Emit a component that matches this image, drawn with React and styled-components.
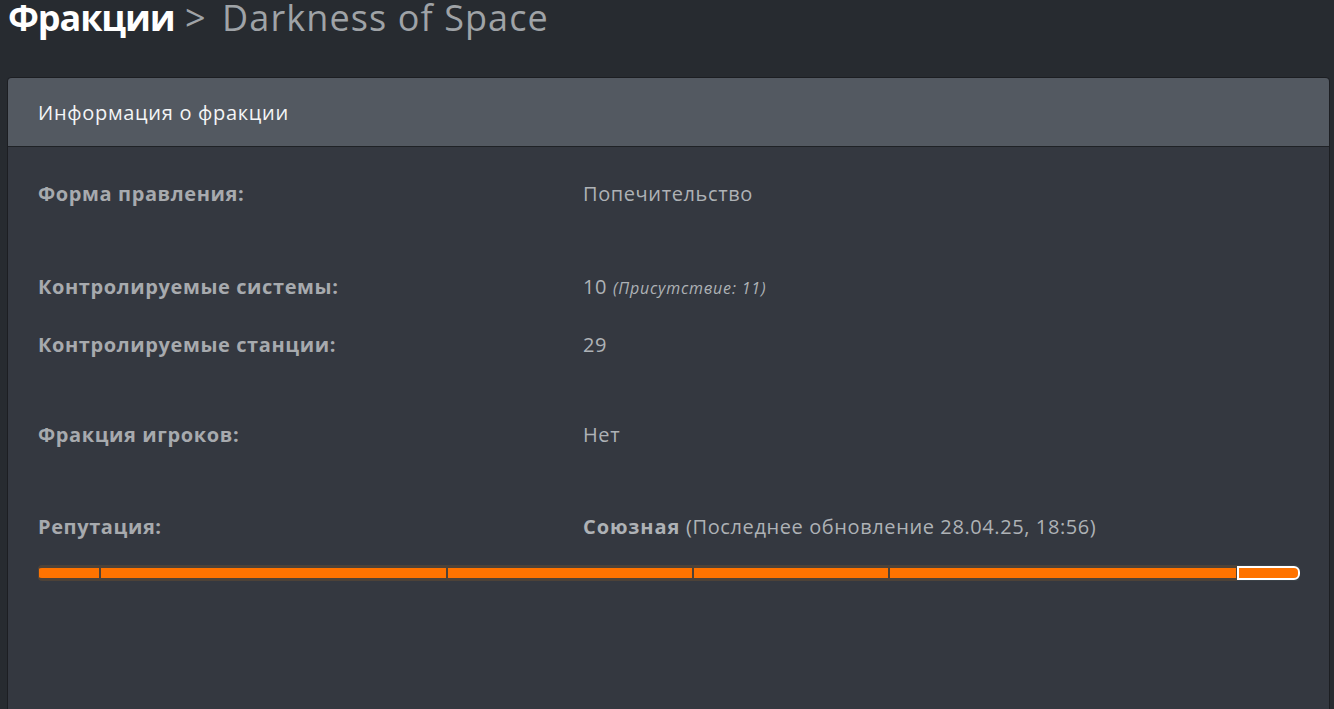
import styled, { createGlobalStyle } from "styled-components";

const GlobalStyle = createGlobalStyle`
  html, body {
    margin: 0;
    padding: 0;
    background: #272b30;
    font-family: "Open Sans", "Noto Sans", sans-serif;
  }
`;

const Page = styled.div`
  width: 1334px;
  height: 709px;
  overflow: hidden;
  padding: 0 4px 0 7px;
  box-sizing: border-box;
`;

const Title = styled.h1`
  margin: 0 0 0 1px;
  height: 77px;
  font-size: 36px;
  font-weight: 700;
  color: #ffffff;
  letter-spacing: -1.1px;
  line-height: 36px;
  white-space: nowrap;
`;

const Crumb = styled.span`
  margin-left: 2px;
  font-weight: 400;
  color: #9fa3a7;
  letter-spacing: 1.1px;
`;

const Sep = styled.span`
  margin-right: 5px;
`;

const Card = styled.div`
  border: 1px solid #1c1e22;
  border-radius: 4px 4px 0 0;
  background: #343840;
  min-height: 640px;
`;

const CardHeader = styled.div`
  height: 68px;
  display: flex;
  align-items: center;
  padding: 0 30px;
  background: #535961;
  border-bottom: 1px solid #1f2226;
  border-radius: 4px 4px 0 0;
  font-size: 20px;
  letter-spacing: 0.7px;
  color: #f4f5f6;
`;

const CardBody = styled.div`
  padding: 33px 29px 0 30px;
  display: flex;
  flex-direction: column;
`;

const Row = styled.div`
  display: grid;
  grid-template-columns: 545px 1fr;
  line-height: 28px;
  font-size: 20px;
  margin-top: ${(p) => p.$gap || 0}px;
`;

const Label = styled.div`
  font-weight: 700;
  color: #a7aaae;
  letter-spacing: 0.6px;
`;

const Value = styled.div`
  color: #aeb2b6;
  letter-spacing: 0.6px;
`;

const Note = styled.em`
  font-size: 16px;
  letter-spacing: 0.8px;
`;

const Strong = styled.b`
  font-weight: 700;
  letter-spacing: 0.9px;
`;

const Bar = styled.div`
  margin-top: 24px;
  height: 16px;
  display: flex;
  background: #3b4249;
  border-radius: 4px;
  overflow: hidden;
`;

const Segment = styled.div`
  flex: 0 0 ${(p) => p.$w}px;
  box-sizing: border-box;
  background: #ff7300;
  border-top: 3px solid #4d4238;
  border-bottom: 3px solid #4d4238;
  border-left: 1px solid #4d4238;
  border-right: 1px solid #4d4238;
  &:first-child {
    border-radius: 4px 0 0 4px;
  }
`;

const Current = styled(Segment)`
  border: 2px solid #ffffff;
  border-radius: 0 6px 6px 0;
  margin: 1px 0;
`;

const segments = [62, 347, 246, 196, 348];

export default function App() {
  return (
    <Page>
      <GlobalStyle />
      <Title>
        Фракции{" "}
        <Crumb>
          <Sep>&gt;</Sep> Darkness of Space
        </Crumb>
      </Title>
      <Card>
        <CardHeader>Информация о фракции</CardHeader>
        <CardBody>
          <Row>
            <Label>Форма правления:</Label>
            <Value>Попечительство</Value>
          </Row>
          <Row $gap={65}>
            <Label>Контролируемые системы:</Label>
            <Value>
              10 <Note>(Присутствие: 11)</Note>
            </Value>
          </Row>
          <Row $gap={29}>
            <Label>Контролируемые станции:</Label>
            <Value>29</Value>
          </Row>
          <Row $gap={62}>
            <Label>Фракция игроков:</Label>
            <Value>Нет</Value>
          </Row>
          <Row $gap={64}>
            <Label>Репутация:</Label>
            <Value>
              <Strong>Союзная</Strong> (Последнее обновление 28.04.25, 18:56)
            </Value>
          </Row>
          <Bar>
            {segments.map((w, i) => (
              <Segment key={i} $w={w} />
            ))}
            <Current $w={63} />
          </Bar>
        </CardBody>
      </Card>
    </Page>
  );
}
